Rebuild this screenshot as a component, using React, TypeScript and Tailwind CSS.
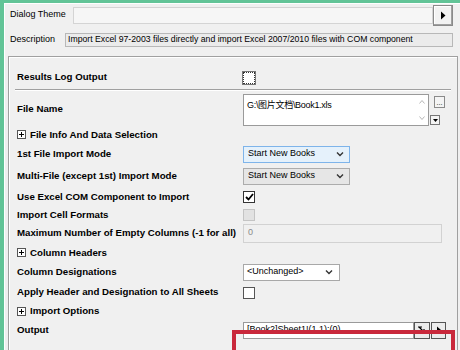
const lbl = "w-[226px] shrink-0 whitespace-nowrap text-[9.7px] font-bold text-black";

function Plus() {
  return (
    <span className="mr-[4px] inline-flex h-[9px] w-[9px] items-center justify-center border border-[#555] bg-white text-[9px] leading-none text-black">
      <svg width="7" height="7" viewBox="0 0 7 7">
        <path d="M1 3.5h5M3.5 1v5" stroke="#000" strokeWidth="1" />
      </svg>
    </span>
  );
}

function Chevron() {
  return (
    <svg width="8" height="6" viewBox="0 0 8 6" className="ml-auto">
      <path d="M1 1.5l3 3 3-3" fill="none" stroke="#333" strokeWidth="1.4" />
    </svg>
  );
}

function Row({ h, children }: { h: number; children: React.ReactNode }) {
  return (
    <div className="flex items-center pl-[8px]" style={{ height: h }}>
      {children}
    </div>
  );
}

export default function App() {
  return (
    <div className="relative h-[350px] w-[460px] overflow-hidden border-l-4 border-t-[3px] border-[#62c497] bg-[#f0f0f0] font-['Liberation_Sans',Arial,sans-serif] text-[9px] text-black">
      <div className="border-l border-t border-white">
        {/* Dialog theme */}
        <div className="flex h-[20px] items-center pl-[5px] pr-[7px] pt-[2px]">
          <span className="w-[63px] shrink-0">Dialog Theme</span>
          <div className="h-[17px] flex-1 border border-[#d4d4d4] bg-[#f6f6f6]" />
          <div className="flex h-[21px] w-[20px] items-center justify-center border border-[#8a8a8a] bg-[#f2f2f2] shadow-[inset_-1px_-1px_0_#a0a0a0,inset_1px_1px_0_#fff]">
            <svg width="6" height="9" viewBox="0 0 6 9">
              <path d="M1 0.5l4.5 4-4.5 4z" fill="#000" />
            </svg>
          </div>
        </div>
        {/* Description */}
        <div className="mt-[9px] flex h-[14px] items-center pl-[5px] pr-[7px]">
          <span className="w-[55px] shrink-0">Description</span>
          <div className="flex h-[14px] flex-1 items-center whitespace-nowrap border border-[#b8b8b8] bg-[#ebebeb] pl-[2px] text-[8.7px]">
            Import Excel 97-2003 files directly and import Excel 2007/2010 files with COM component
          </div>
        </div>

        {/* Panel */}
        <div className="ml-[3px] mr-[2px] mt-[9px] h-[300px] border-l border-r border-t border-[#a0a0a0] shadow-[inset_1px_1px_0_#fff] pt-[10px]">
          <Row h={21}>
            <span className={lbl}>Results Log Output</span>
            <span className="h-[12px] w-[12px] border border-dotted border-[#333] bg-white outline outline-1 outline-[#777]" />
          </Row>
          <div className="mx-[6px] mt-[1px] border-b border-t border-b-white border-t-[#a0a0a0]" />
          <Row h={36}>
            <span className={lbl}>File Name</span>
            <div className="relative mt-[2px] flex h-[32px] w-[186px] border border-[#9a9a9a] bg-white">
              <span className="pl-[3px] pt-[4px] font-['Liberation_Sans','Noto_Sans_CJK_SC',sans-serif] text-[9px] tracking-[-0.3px]">G:\图片文档\Book1.xls</span>
              <div className="ml-auto flex w-[12px] flex-col items-center justify-between py-[5px]">
                <svg width="6" height="4" viewBox="0 0 6 4"><path d="M0.5 3.5l2.5-3 2.5 3" fill="none" stroke="#b8b8b8" /></svg>
                <svg width="6" height="4" viewBox="0 0 6 4"><path d="M0.5 0.5l2.5 3 2.5-3" fill="none" stroke="#b8b8b8" /></svg>
              </div>
            </div>
            <div className="flex h-[32px] flex-col justify-between pl-[1px]">
              <div className="ml-[4px] mt-[3px] flex h-[12px] w-[11px] items-end justify-center border border-[#8a8a8a] bg-[#f4f4f4] text-[7px] leading-[8px]">...</div>
              <div className="flex h-[10px] w-[10px] items-center justify-center border border-[#777] bg-[#f4f4f4]">
                <svg width="5" height="3" viewBox="0 0 5 3"><path d="M0 0h5l-2.5 3z" fill="#000" /></svg>
              </div>
            </div>
          </Row>
          <Row h={16}>
            <span className={lbl + " flex items-center"}><Plus />File Info And Data Selection</span>
          </Row>
          <Row h={22}>
            <span className={lbl}>1st File Import Mode</span>
            <div className="flex h-[17px] w-[107px] items-center border border-[#7eb4ea] bg-[#e5f1fb] pl-[4px] pr-[5px]">
              Start New Books<Chevron />
            </div>
          </Row>
          <Row h={22}>
            <span className={lbl}>Multi-File (except 1st) Import Mode</span>
            <div className="flex h-[17px] w-[107px] items-center border border-[#acacac] bg-[#e6e6e6] pl-[4px] pr-[5px]">
              Start New Books<Chevron />
            </div>
          </Row>
          <Row h={20}>
            <span className={lbl}>Use Excel COM Component to Import</span>
            <span className="flex h-[12px] w-[12px] items-center justify-center border border-[#333] bg-white">
              <svg width="9" height="8" viewBox="0 0 9 8"><path d="M1 4l2.5 2.5L8 1" fill="none" stroke="#000" strokeWidth="1.8" /></svg>
            </span>
          </Row>
          <Row h={16}>
            <span className={lbl}>Import Cell Formats</span>
            <span className="h-[12px] w-[12px] border border-[#c4c4c4] bg-[#e2e2e2]" />
          </Row>
          <Row h={20}>
            <span className={lbl}>Maximum Number of Empty Columns (-1 for all)</span>
            <div className="flex h-[19px] w-[199px] items-center border border-[#d2d2d2] bg-[#f0f0f0] pl-[4px] text-[#8a8a8a]">0</div>
          </Row>
          <Row h={20}>
            <span className={lbl + " flex items-center"}><Plus />Column Headers</span>
          </Row>
          <Row h={18}>
            <span className={lbl}>Column Designations</span>
            <div className="flex h-[17px] w-[97px] items-center border border-[#a8a8a8] bg-white pl-[3px] pr-[6px]">
              &lt;Unchanged&gt;<Chevron />
            </div>
          </Row>
          <Row h={23}>
            <span className={lbl}>Apply Header and Designation to All Sheets</span>
            <span className="h-[12px] w-[12px] border border-[#555] bg-white" />
          </Row>
          <Row h={14}>
            <span className={lbl + " flex items-center"}><Plus />Import Options</span>
          </Row>
          <Row h={24}>
            <span className={lbl}>Output</span>
            <div className="flex h-[17px] w-[171px] items-center border border-[#9a9a9a] bg-white pl-[3px]">[Book2]Sheet1!(1,1):(0)</div>
            <div className="flex h-[17px] w-[16px] items-center justify-center border border-[#555] bg-[#ececec]">
              <svg width="10" height="8" viewBox="0 0 10 8"><path d="M1 1h4M2 1l5 5M7 3v3H4" fill="none" stroke="#000" strokeWidth="1.2" /></svg>
            </div>
            <div className="ml-[1px] flex h-[17px] w-[15px] items-center justify-center border border-[#555] bg-[#ececec]">
              <svg width="6" height="8" viewBox="0 0 6 8"><path d="M1 0.5l4 3.5-4 3.5z" fill="#000" /></svg>
            </div>
          </Row>
        </div>
      </div>
      {/* red highlight annotation */}
      <div className="absolute left-[228px] top-[327px] h-[40px] w-[223px] border-4 border-[#c9283b]" />
    </div>
  );
}
